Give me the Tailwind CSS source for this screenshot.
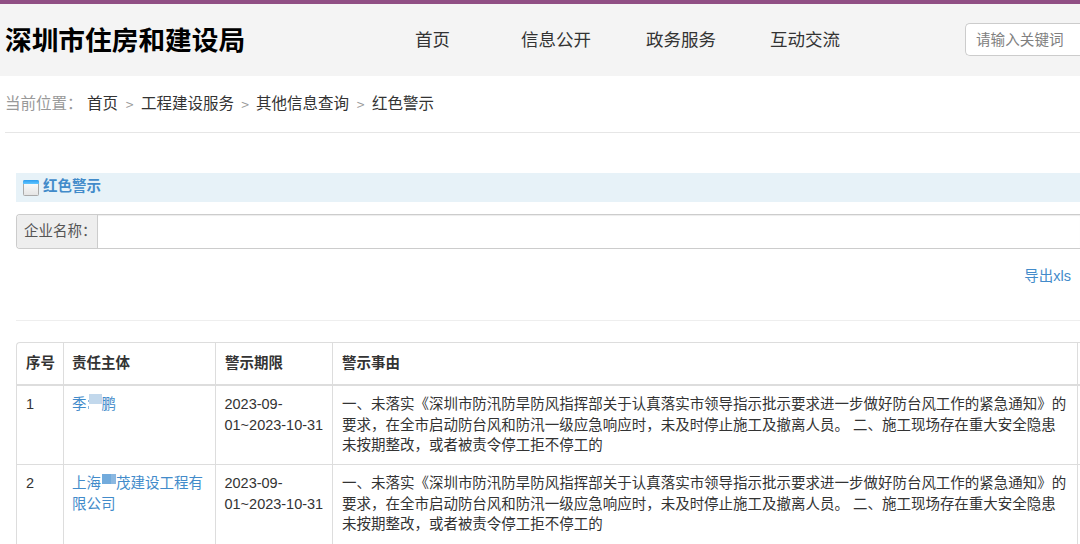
<!DOCTYPE html>
<html lang="zh-CN">
  <head>
    <meta charset="UTF-8" />
    <meta name="viewport" content="width=device-width, initial-scale=1.0" />
    <title>红色警示 - 深圳市住房和建设局</title>
    <script src="https://cdn.jsdelivr.net/npm/@tailwindcss/browser@4"></script>
  </head>
  <body class="h-[544px] overflow-hidden bg-white font-['Liberation_Sans','Noto_Sans_CJK_SC',sans-serif] text-[14.49px] leading-[20.7px] text-[#333] [text-spacing-trim:space-all]">
    <!-- 页头 -->
    <header class="flex h-[76px] items-center border-t-4 border-[#904f84] bg-[#f4f4f4] pl-[5px]">
      <h1 class="w-[410px] shrink-0 pt-[2px] text-[26.7px] leading-9 font-bold whitespace-nowrap text-black">深圳市住房和建设局</h1>
      <nav class="flex w-[550px] shrink-0 text-[17.5px] leading-6 whitespace-nowrap">
        <a class="w-[106px]">首页</a>
        <a class="w-[125px]">信息公开</a>
        <a class="w-[124px]">政务服务</a>
        <a>互动交流</a>
      </nav>
      <input
        type="text"
        placeholder="请输入关键词"
        class="mb-px h-[33px] w-0 grow rounded-l-[5px] border border-r-0 border-[#ccc] bg-white pl-[10px] text-[14.6px] placeholder:text-[#808080]"
      />
    </header>

    <!-- 面包屑 -->
    <div class="ml-[5px] flex h-[57px] items-center border-b border-[#e6e6e6] text-[15.5px] leading-6 whitespace-nowrap text-[#999]">
      <span class="w-[82px]">当前位置：</span>
      <a class="text-[#333]">首页</a>
      <span class="w-[23px] text-center font-['Noto_Sans_CJK_SC',sans-serif] text-[14px]">&gt;</span>
      <a class="text-[#333]">工程建设服务</a>
      <span class="w-[22px] text-center font-['Noto_Sans_CJK_SC',sans-serif] text-[14px]">&gt;</span>
      <a class="text-[#333]">其他信息查询</a>
      <span class="w-[23px] text-center font-['Noto_Sans_CJK_SC',sans-serif] text-[14px]">&gt;</span>
      <a class="text-[#333]">红色警示</a>
    </div>

    <main class="pt-10 pl-4">
      <h2 class="flex h-[29px] items-center bg-[#e7f2f8] pl-[7px] font-bold text-[#428bca]">
        <svg class="mr-1" width="16" height="16" viewBox="0 0 16 16">
          <defs>
            <linearGradient id="bar" x1="0" y1="0" x2="0" y2="1">
              <stop offset="0" stop-color="#2d9df0" />
              <stop offset="1" stop-color="#62c6ff" />
            </linearGradient>
            <linearGradient id="pane" x1="0" y1="0" x2="0" y2="1">
              <stop offset="0" stop-color="#ffffff" />
              <stop offset="1" stop-color="#e4e4e4" />
            </linearGradient>
          </defs>
          <rect x="0.5" y="0.5" width="15" height="15" rx="1" fill="url(#pane)" stroke="#aaa" />
          <path d="M0 4V1.5Q0 0 1.5 0H14.5Q16 0 16 1.5V4Z" fill="url(#bar)" />
        </svg>
        <span class="-mt-[3px]">红色警示</span>
      </h2>

      <!-- 查询条件 -->
      <div class="mt-3 flex h-[35px] overflow-hidden rounded-l-[4px] border border-r-0 border-[#ccc]">
        <label class="flex w-[81px] shrink-0 items-center border-r border-[#ccc] bg-[#eee] pl-[7px] whitespace-nowrap text-[#555]">企业名称<span>：</span></label>
        <input type="text" class="w-0 grow bg-white shadow-[inset_0_1px_1px_rgba(0,0,0,0.075)]" />
      </div>

      <div class="flex h-[72px] justify-end border-b border-[#eee] pt-[17px] pr-[9px]">
        <a class="text-[#428bca]">导出xls</a>
      </div>

      <table class="mt-[21px] w-full table-fixed border-separate border-spacing-0 rounded-tl-[4px] border-t border-l border-[#ddd]">
        <colgroup>
          <col class="w-[47px]" />
          <col class="w-[152px]" />
          <col class="w-[117px]" />
          <col class="w-[745px]" />
          <col />
        </colgroup>
        <thead>
          <tr class="h-[43px] text-left">
            <th class="border-r border-b-2 border-[#ddd] pl-[9px]">序号</th>
            <th class="border-r border-b-2 border-[#ddd] pl-2">责任主体</th>
            <th class="border-r border-b-2 border-[#ddd] pl-[9px]">警示期限</th>
            <th class="border-r border-b-2 border-[#ddd] pl-[9px]">警示事由</th>
            <th class="border-b-2 border-[#ddd] p-0"></th>
          </tr>
        </thead>
        <tbody class="align-top">
          <tr class="h-[79px]">
            <td class="border-r border-b border-[#ddd] pt-2 pl-[9px]">1</td>
            <td class="border-r border-b border-[#ddd] pt-2 pl-2 text-[#428bca]">
              <!-- 姓名打码 -->
              <a class="flex">季<span class="relative w-[15px]"><i class="absolute top-[6px] left-[1px] h-[2px] w-px bg-[#428bca]/60"></i><i class="absolute top-[12px] left-[1px] h-[3px] w-px bg-[#428bca]/60"></i><i class="absolute top-0 left-[2px] h-[10px] w-[13px] bg-[#c2d8ec]"></i></span>鹏</a>
            </td>
            <td class="border-r border-b border-[#ddd] pt-2 pl-[8.5px]">2023-09-<br />01~2023-10-31</td>
            <td class="border-r border-b border-[#ddd] pt-2 pl-[9px] whitespace-nowrap">
              一、未落实《深圳市防汛防旱防风指挥部关于认真落实市领导指示批示要求进一步做好防台风工作的紧急通知》的<br />
              要求，在全市启动防台风和防汛一级应急响应时，未及时停止施工及撤离人员。 二、施工现场存在重大安全隐患<br />
              未按期整改，或者被责令停工拒不停工的
            </td>
            <td class="border-b border-[#ddd] p-0"></td>
          </tr>
          <tr class="h-[80px]">
            <td class="border-r border-b border-[#ddd] pt-2 pl-[9px]">2</td>
            <td class="border-r border-b border-[#ddd] pt-2 pl-2 text-[#428bca]">
              <a>
                <span class="flex">上海<span class="mt-px flex h-[10px] w-[15px] pl-px"><i class="w-[9px] bg-[#72abdc]"></i><i class="w-[5px] bg-[#8bb8e1]"></i></span>茂建设工程有</span>
                限公司
              </a>
            </td>
            <td class="border-r border-b border-[#ddd] pt-2 pl-[8.5px]">2023-09-<br />01~2023-10-31</td>
            <td class="border-r border-b border-[#ddd] pt-2 pl-[9px] whitespace-nowrap">
              一、未落实《深圳市防汛防旱防风指挥部关于认真落实市领导指示批示要求进一步做好防台风工作的紧急通知》的<br />
              要求，在全市启动防台风和防汛一级应急响应时，未及时停止施工及撤离人员。 二、施工现场存在重大安全隐患<br />
              未按期整改，或者被责令停工拒不停工的
            </td>
            <td class="border-b border-[#ddd] p-0"></td>
          </tr>
        </tbody>
      </table>
    </main>
  </body>
</html>
